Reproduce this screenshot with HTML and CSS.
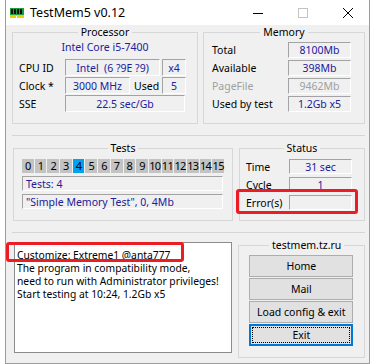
FILE: index.html
```html
<!DOCTYPE html>
<html lang="en">
<head>
    <meta charset="UTF-8">
    <meta name="viewport" content="width=device-width, initial-scale=1.0">
    <title>TestMem5 v0.12</title>
    <link rel="stylesheet" href="styles.css">
</head>
<body>
    <div class="window">
        <div class="titlebar">
            <svg class="app-icon" viewBox="0 0 14 10">
                <rect x="0" y="0" width="14" height="7" fill="#1f9d3c"></rect>
                <rect x="1" y="1" width="2" height="5" fill="#111"></rect>
                <rect x="4" y="1" width="2" height="5" fill="#111"></rect>
                <rect x="7" y="1" width="2" height="5" fill="#111"></rect>
                <rect x="10" y="1" width="2" height="5" fill="#111"></rect>
                <rect x="0" y="7" width="14" height="3" fill="#e6d200"></rect>
                <rect x="6" y="8" width="1" height="2" fill="#fff"></rect>
            </svg>
            <span class="title">TestMem5 v0.12</span>
            <div class="controls">
                <span class="ctl"><svg viewBox="0 0 10 10"><path d="M0 5.5h10" stroke="#000" stroke-width="1"></path></svg></span>
                <span class="ctl"><svg viewBox="0 0 10 10"><rect x="0.5" y="0.5" width="9" height="9" fill="none" stroke="#c4c4c4"></rect></svg></span>
                <span class="ctl"><svg viewBox="0 0 10 10"><path d="M0 0L10 10M10 0L0 10" stroke="#000" stroke-width="1"></path></svg></span>
            </div>
        </div>

        <div class="client">
            <div class="section section-top">
                <div class="group processor">
                    <div class="group-title">Processor</div>
                    <div class="cpu-name">Intel Core i5-7400</div>
                    <div class="row">
                        <span class="label">CPU ID</span>
                        <span class="field f-cpuid">Intel&nbsp; (6 ?9E ?9)</span>
                        <span class="field f-small">x4</span>
                    </div>
                    <div class="row">
                        <span class="label">Clock *</span>
                        <span class="field f-clock">3000 MHz</span>
                        <span class="used">Used</span>
                        <span class="field f-small">5</span>
                    </div>
                    <div class="row">
                        <span class="label">SSE</span>
                        <span class="field f-sse">22.5 sec/Gb</span>
                    </div>
                </div>

                <div class="group memory">
                    <div class="group-title">Memory</div>
                    <div class="mrow"><span class="mlabel">Total</span><span class="field f-mem">8100Mb</span></div>
                    <div class="mrow"><span class="mlabel">Available</span><span class="field f-mem">398Mb</span></div>
                    <div class="mrow disabled"><span class="mlabel">PageFile</span><span class="field f-mem">9462Mb</span></div>
                    <div class="mrow"><span class="mlabel">Used by test</span><span class="field f-mem">1.2Gb x5</span></div>
                </div>
            </div>

            <div class="section section-mid">
                <div class="group tests">
                    <div class="group-title">Tests</div>
                    <div class="cells">
                        <span class="cell">0</span><span class="cell">1</span><span class="cell">2</span><span class="cell">3</span>
                        <span class="cell active">4</span><span class="cell">5</span><span class="cell">6</span><span class="cell">7</span>
                        <span class="cell">8</span><span class="cell">9</span><span class="cell">10</span><span class="cell">11</span>
                        <span class="cell">12</span><span class="cell">13</span><span class="cell">14</span><span class="cell">15</span>
                    </div>
                    <div class="field f-wide">Tests: 4</div>
                    <div class="field f-wide">"Simple Memory Test", 0, 4Mb</div>
                </div>

                <div class="group status">
                    <div class="group-title">Status</div>
                    <div class="srow"><span class="mlabel">Time</span><span class="field f-mem">31 sec</span></div>
                    <div class="srow"><span class="mlabel">Cycle</span><span class="field f-mem">1</span></div>
                    <div class="srow"><span class="mlabel">Error(s)</span><span class="field f-mem"></span></div>
                </div>
            </div>

            <div class="section section-bottom">
                <div class="memo">
                    <div>Customize: Extreme1 @anta777</div>
                    <div>The program in compatibility mode,</div>
                    <div>need to run with Administrator privileges!</div>
                    <div>Start testing at 10:24, 1.2Gb x5</div>
                </div>

                <div class="group links">
                    <div class="group-title">testmem.tz.ru</div>
                    <button class="btn">Home</button>
                    <button class="btn">Mail</button>
                    <button class="btn">Load config &amp; exit</button>
                    <button class="btn btn-focus"><span>Exit</span></button>
                </div>
            </div>
        </div>
    </div>

    <div class="mark mark-errors"></div>
    <div class="mark mark-customize"></div>
</body>
</html>
```

FILE: styles.css
```css
* {
    box-sizing: border-box;
}

body {
    margin: 0;
    background: #fff;
    font-family: "Noto Sans", "Open Sans", sans-serif;
    font-size: 10.5px;
    color: #000;
    width: 374px;
    height: 364px;
    overflow: hidden;
}

.window {
    margin-left: 5px;
    width: 365px;
    height: 364px;
    border-left: 1px solid #9c9c9c;
    border-right: 1px solid #9c9c9c;
    display: flex;
    flex-direction: column;
}

/* title bar */
.titlebar {
    height: 25px;
    background: #fff;
    display: flex;
    align-items: center;
    flex-shrink: 0;
}

.app-icon {
    width: 14px;
    height: 10px;
    margin-left: 4px;
}

.title {
    margin-left: 6px;
    font-size: 12.5px;
    line-height: 16px;
}

.controls {
    margin-left: auto;
    display: flex;
    margin-right: -1px;
}

.ctl {
    width: 45px;
    height: 25px;
    display: flex;
    align-items: center;
    justify-content: center;
}

.ctl svg {
    width: 10px;
    height: 10px;
}

/* client area */
.client {
    flex: 1;
    background: #f0f0f0;
    padding: 0 4px 0 6px;
    border-bottom: 1px solid #9c9c9c;
}

.section {
    display: flex;
    align-items: flex-start;
    border-bottom: 1px solid #d5d5d5;
}

.section-top {
    padding-top: 7px;
    height: 111px;
}

.section-mid {
    padding-top: 12px;
    height: 97px;
}

.section-bottom {
    border-bottom: none;
}

.group {
    border: 1px solid #d7d7d7;
    position: relative;
}

.group-title {
    width: fit-content;
    margin: -8px auto 0;
    padding: 0 3px;
    background: #f0f0f0;
    line-height: 14px;
}

.field {
    display: inline-flex;
    align-items: center;
    justify-content: center;
    height: 17px;
    border: 1px solid;
    border-color: #a3a3a3 #fff #fff #a3a3a3;
    color: #20209c;
    white-space: nowrap;
}

/* processor */
.processor {
    width: 186px;
    height: 92px;
}

.cpu-name {
    text-align: center;
    color: #20209c;
    line-height: 14px;
    margin-top: 1px;
}

.row {
    display: flex;
    align-items: center;
    height: 17px;
    margin-top: 1px;
    padding-left: 6px;
}

.cpu-name + .row {
    margin-top: 5px;
}

.label {
    width: 46px;
}

.f-cpuid {
    width: 95px;
}

.f-small {
    width: 24px;
    margin-left: 2px;
}

.f-clock {
    width: 65px;
}

.used {
    width: 30px;
    padding-left: 4px;
}

.f-sse {
    width: 120px;
}

/* memory + status rows */
.memory {
    width: 162px;
    height: 92px;
    margin-left: 5px;
}

.mrow,
.srow {
    display: flex;
    align-items: center;
    height: 16px;
    margin-top: 2px;
    padding-left: 8px;
}

.memory .group-title + .mrow {
    margin-top: 3px;
}

.mlabel {
    width: 76px;
}

.f-mem {
    width: 63px;
    height: 16px;
}

.disabled .mlabel,
.disabled .field {
    color: #a0a0a0;
}

/* tests */
.tests {
    width: 220px;
    height: 73px;
    margin-left: 1px;
    padding: 0 8px;
}

.cells {
    display: grid;
    grid-template-columns: repeat(16, 1fr);
    gap: 1px;
    height: 14px;
    margin-top: 4px;
}

.cell {
    background: #c3c3c3;
    text-align: center;
    line-height: 14px;
    font-size: 11px;
    letter-spacing: -0.7px;
}

.cell.active {
    background: #00a2ed;
}

.f-wide {
    display: flex;
    justify-content: flex-start;
    width: 201px;
    height: 15px;
    margin-top: 3px;
    padding-left: 3px;
}

.status {
    width: 126px;
    height: 73px;
    margin-left: 6px;
}

.srow {
    padding-left: 6px;
    margin-top: 3px;
    height: 15px;
}

.status .group-title + .srow {
    margin-top: 4px;
}

.srow .mlabel {
    width: 43px;
}

.srow .f-mem {
    height: 15px;
}

/* bottom */
.memo {
    width: 219px;
    height: 111px;
    margin: 9px 0 0 2px;
    background: #fff;
    border: 1px solid #8c8c8c;
    padding: 6px 2px;
    font-size: 10.3px;
    line-height: 13px;
    white-space: nowrap;
    overflow: hidden;
}

.links {
    width: 127px;
    height: 113px;
    margin: 12px 0 0 6px;
    padding-left: 10px;
}

.btn {
    display: block;
    width: 104px;
    height: 22px;
    margin-top: 1px;
    background: #e1e1e1;
    border: 1px solid #adadad;
    font-family: inherit;
    font-size: 10.5px;
    color: #000;
    padding: 0;
}

.links .group-title + .btn {
    margin-top: 3px;
}

.btn-focus {
    border: 2px solid #0078d7;
    padding: 1px;
}

.btn-focus span {
    display: flex;
    align-items: center;
    justify-content: center;
    height: 100%;
    border: 1px dotted #000;
}

/* red highlight marks */
.mark {
    position: absolute;
    border: 3px solid #ec1c24;
    border-radius: 3px;
}

.mark-errors {
    left: 236px;
    top: 189px;
    width: 122px;
    height: 25px;
}

.mark-customize {
    left: 6px;
    top: 242px;
    width: 178px;
    height: 20px;
}
```
